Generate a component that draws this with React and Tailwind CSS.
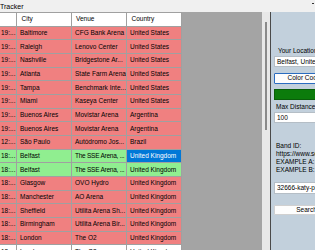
const ROWS = [
  { t: '19:...', city: 'Baltimore', venue: 'CFG Bank Arena', country: 'United States', tone: 'red' },
  { t: '19:...', city: 'Raleigh', venue: 'Lenovo Center', country: 'United States', tone: 'red' },
  { t: '19:...', city: 'Nashville', venue: 'Bridgestone Ar...', country: 'United States', tone: 'red' },
  { t: '19:...', city: 'Atlanta', venue: 'State Farm Arena', country: 'United States', tone: 'red' },
  { t: '19:...', city: 'Tampa', venue: 'Benchmark Inte...', country: 'United States', tone: 'red' },
  { t: '19:...', city: 'Miami', venue: 'Kaseya Center', country: 'United States', tone: 'red' },
  { t: '19:...', city: 'Buenos Aires', venue: 'Movistar Arena', country: 'Argentina', tone: 'red' },
  { t: '19:...', city: 'Buenos Aires', venue: 'Movistar Arena', country: 'Argentina', tone: 'red' },
  { t: '12:...', city: 'São Paulo', venue: 'Autódromo Jos...', country: 'Brazil', tone: 'red' },
  { t: '18:...', city: 'Belfast', venue: 'The SSE Arena, ...', country: 'United Kingdom', tone: 'green', selected: true, tight: true },
  { t: '18:...', city: 'Belfast', venue: 'The SSE Arena, ...', country: 'United Kingdom', tone: 'green', tight: true },
  { t: '18:...', city: 'Glasgow', venue: 'OVO Hydro', country: 'United Kingdom', tone: 'red' },
  { t: '18:...', city: 'Manchester', venue: 'AO Arena', country: 'United Kingdom', tone: 'red' },
  { t: '18:...', city: 'Sheffield', venue: 'Utilita Arena Sh...', country: 'United Kingdom', tone: 'red' },
  { t: '18:...', city: 'Birmingham', venue: 'Utilita Arena Bir...', country: 'United Kingdom', tone: 'red' },
  { t: '18:...', city: 'London', venue: 'The O2', country: 'United Kingdom', tone: 'red' },
  { t: '18:...', city: 'London', venue: 'The O2', country: 'United Kingdom', tone: 'none' },
]

const TONES = {
  red: 'bg-[#f08080]',
  green: 'bg-[#90ee90]',
  none: 'bg-white',
}

function Cell({ w, className = '', children }) {
  return (
    <div className={`${w} h-full shrink-0 border-r border-[#a0a0a0] flex items-center overflow-hidden whitespace-nowrap ${className}`}>
      {children}
    </div>
  )
}

export default function App() {
  return (
    <div className="w-[315px] h-[250px] overflow-hidden flex flex-col font-['Liberation_Sans',Arial,sans-serif] text-[6.5px] text-black bg-white">
      {/* Title bar */}
      <div className="h-[12px] shrink-0 bg-[#f0f0f0] flex items-center justify-between">
        <span className="leading-none text-[7px]">Tracker</span>
        <span className="w-[2px] h-[1px] bg-[#333] mr-[1px] mb-[5px]" />
      </div>

      <div className="flex-1 flex min-h-0">
        {/* Grid */}
        <div className="w-[262px] shrink-0 bg-[#a4a4a4] overflow-hidden">
          <div className="w-[182px] bg-white">
            <div className="h-[13.7px] flex border-t border-[#a0a0a0] bg-white">
              <Cell w="w-[17px]" />
              <Cell w="w-[55px]" className="pl-[4.5px]">City</Cell>
              <Cell w="w-[55px]" className="pl-[4px]">Venue</Cell>
              <Cell w="w-[55px]" className="pl-[4.5px]">Country</Cell>
            </div>
            {ROWS.map((r, i) => (
              <div key={i} className={`h-[13.67px] flex border-t border-[#a0a0a0] ${TONES[r.tone]}`}>
                <Cell w="w-[17px]" className="pl-[1px]">{r.t}</Cell>
                <Cell w="w-[55px]" className="pl-[3px]">{r.city}</Cell>
                <Cell w="w-[55px]" className={`pl-[3px] ${r.tight ? 'tracking-[-0.25px]' : ''}`}>{r.venue}</Cell>
                <Cell w="w-[55px]" className={`pl-[3px] ${r.selected ? 'bg-[#0078d7] text-white' : ''}`}>{r.country}</Cell>
              </div>
            ))}
          </div>
        </div>

        {/* Scroll strip */}
        <div className="w-[8px] shrink-0 bg-[#e8e8e8] flex justify-center pt-[10px]">
          <div className="w-[2px] h-[108px] bg-[#8a8a8a]" />
        </div>
        <div className="w-[1px] shrink-0 bg-[#4a4a4a]" />

        {/* Side panel */}
        <div className="w-[120px] shrink-0 bg-[#c2d0dc] pl-[3px] flex flex-col overflow-hidden">
          <div className="h-[9px] leading-[9px] mt-[34px] pl-[4px] whitespace-nowrap">Your Location</div>
          <div className="w-[80px] h-[11px] mt-[1px] bg-white border border-[#b5bec6] flex items-center pl-[2px] whitespace-nowrap overflow-hidden">
            Belfast, United Kingdom
          </div>
          <button className="w-[65px] h-[10.5px] mt-[6px] bg-[#fdfdfd] border border-[#2a6cc0] rounded-[1px] flex items-center justify-center whitespace-nowrap">
            Color Coding
          </button>
          <div className="w-[80px] h-[11.5px] mt-[5px] bg-[#0c7c0c] border border-[#0a5e0a]" />
          <div className="h-[8px] leading-[8px] mt-[3px] pl-[2px] whitespace-nowrap">Max Distance (miles)</div>
          <div className="w-[80px] h-[11px] mt-[1px] bg-white border border-[#b5bec6] flex items-center pl-[2px]">
            100
          </div>
          <div className="mt-[18.6px] pl-[2px] leading-[8.3px] whitespace-nowrap">
            <div>Band ID:</div>
            <div>https://www.setlist.fm/setlists/katy-perry</div>
            <div>EXAMPLE A: '32666-katy-perry'</div>
            <div>EXAMPLE B: '12345-band-name'</div>
          </div>
          <div className="w-[80px] h-[11.5px] mt-[7.5px] bg-white border border-[#b5bec6] flex items-center pl-[2px] whitespace-nowrap overflow-hidden">
            32666-katy-perry
          </div>
          <button className="w-[65px] h-[10px] mt-[11.5px] bg-[#fdfdfd] border border-[#d0d0d0] rounded-[1px] flex items-center justify-center">
            Search
          </button>
        </div>
      </div>
    </div>
  )
}
